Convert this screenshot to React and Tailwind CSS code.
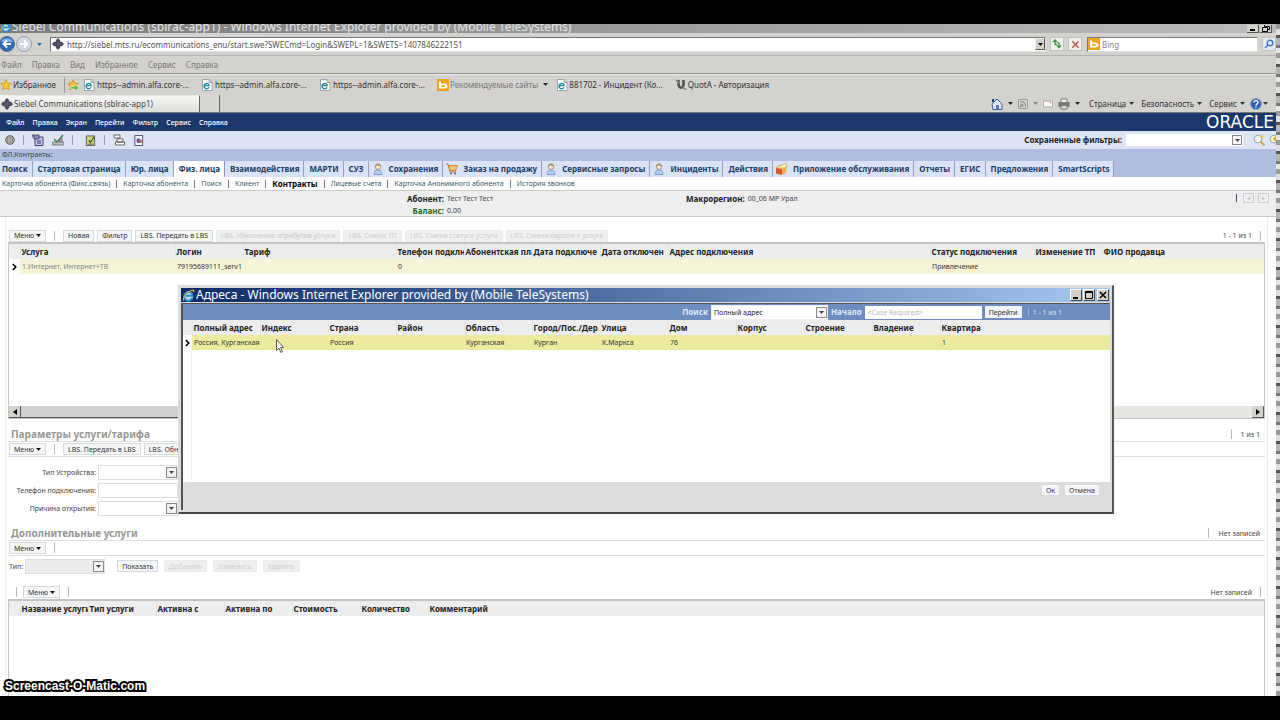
import { useState } from "react";

const favorites = [
  { id: 1, text: "https--admin.alfa.core-..." },
  { id: 2, text: "https--admin.alfa.core-..." },
  { id: 3, text: "https--admin.alfa.core-..." },
];

const screenTabs = [
  { text: "Поиск" },
  { text: "Стартовая страница" },
  { text: "Юр. лица" },
  { text: "Физ. лица", active: true },
  { text: "Взаимодействия" },
  { text: "МАРТИ" },
  { text: "СУЗ" },
  { text: "Сохранения", icon: "person" },
  { text: "Заказ на продажу", icon: "cart" },
  { text: "Сервисные запросы", icon: "person" },
  { text: "Инциденты", icon: "person" },
  { text: "Действия" },
  { text: "Приложение обслуживания", icon: "box" },
  { text: "Отчеты" },
  { text: "ЕГИС" },
  { text: "Предложения" },
  { text: "SmartScripts" },
];

const viewTabs = [
  "Карточка абонента (Фикс.связь)",
  "Карточка абонента",
  "Поиск",
  "Клиент",
  "Контракты",
  "Лицевые счета",
  "Карточка Анонимного абонента",
  "История звонков",
];

const serviceColumns = [
  { title: "Услуга", width: "w-[155px]", value: "1.Интернет, Интернет+ТВ" },
  { title: "Логин", width: "w-[68px]", value: "79195689111_serv1" },
  { title: "Тариф", width: "w-[153px]", value: "" },
  { title: "Телефон подклн", width: "w-[68px]", value: "0" },
  { title: "Абонентская пла", width: "w-[68px]", value: "" },
  { title: "Дата подключе", width: "w-[68px]", value: "" },
  { title: "Дата отключен", width: "w-[68px]", value: "" },
  { title: "Адрес подключения", width: "w-[262px]", value: "" },
  { title: "Статус подключения", width: "w-[104px]", value: "Привлечение" },
  { title: "Изменение ТП", width: "w-[68px]", value: "" },
  { title: "ФИО продавца", width: "", value: "" },
];

const addressColumns = [
  { title: "Полный адрес", width: "w-[68px]", value: "Россия, Курганская" },
  { title: "Индекс", width: "w-[68px]", value: "" },
  { title: "Страна", width: "w-[68px]", value: "Россия" },
  { title: "Район", width: "w-[68px]", value: "" },
  { title: "Область", width: "w-[68px]", value: "Курганская" },
  { title: "Город/Пос./Дер", width: "w-[68px]", value: "Курган" },
  { title: "Улица", width: "w-[68px]", value: "К.Маркса" },
  { title: "Дом", width: "w-[68px]", value: "76" },
  { title: "Корпус", width: "w-[68px]", value: "" },
  { title: "Строение", width: "w-[68px]", value: "" },
  { title: "Владение", width: "w-[68px]", value: "" },
  { title: "Квартира", width: "", value: "1" },
];

const extraColumns = [
  { title: "Название услуги", width: "w-[68px]" },
  { title: "Тип услуги", width: "w-[68px]" },
  { title: "Активна с", width: "w-[68px]" },
  { title: "Активна по", width: "w-[68px]" },
  { title: "Стоимость", width: "w-[68px]" },
  { title: "Количество", width: "w-[68px]" },
  { title: "Комментарий", width: "" },
];

function IeIcon({ className = "size-3" }) {
  return (
    <svg viewBox="0 0 16 16" className={className} fill="none">
      <circle cx="8" cy="8.5" r="5.6" fill="#bfe4f7" />
      <path d="M13 10.6A5.3 5.3 0 1 1 13.2 8.4H4.2" stroke="#2a86c8" strokeWidth="2.4" />
      <path d="M2.2 14C.2 11.500 5 4.500 11 2c3-1.200 4.400-.6 3.400 2" stroke="#e8b93c" strokeWidth="1.3" />
    </svg>
  );
}

function PageIcon() {
  return (
    <svg viewBox="0 0 12 12" className="size-3" fill="none">
      <path d="M1.500.5h6.500l3 3v8h-9.500z" fill="#fff" stroke="#9aa4ae" />
      <path d="M8 .5v3h3" stroke="#9aa4ae" />
      <path d="M8 8.200A2.600 2.600 0 1 1 8.200 6.600H3" stroke="#1f8a9c" strokeWidth="1.400" />
    </svg>
  );
}

function SiebelIcon() {
  return (
    <svg viewBox="0 0 12 12" className="size-3 shrink-0" fill="#4a4a5c">
      <path d="M6 0l2.200 2.200v1.600H10L12 6l-2 2.200H8.200v1.600L6 12 3.800 9.800V8.200H2L0 6l2-2.200h1.800V2.200z" />
      <path d="M6 3.500v5M3.500 6h5" stroke="#66667a" strokeWidth=".8" />
    </svg>
  );
}

function StarIcon({ add }) {
  return (
    <svg viewBox="0 0 12 12" className="size-3 shrink-0">
      <path d="M6 .8l1.600 3.400 3.700.4-2.800 2.500.8 3.700L6 9l-3.300 1.800.8-3.700L.7 4.600l3.700-.4z" fill="#f8c43a" stroke="#d8901c" strokeWidth=".8" />
      {add && <path d="M4 7.500h4V5.400L12 8.800 8 12v-2H4z" fill="#58b83c" stroke="#fff" strokeWidth=".5" />}
    </svg>
  );
}

function BingIcon() {
  return (
    <svg viewBox="0 0 12 12" className="size-3 shrink-0">
      <rect width="12" height="12" fill="#eda51f" />
      <path d="M2 2.500h2v2h3.500c4 0 4 5 0 5H2z" fill="#fff" />
      <ellipse cx="6" cy="7" rx="2" ry="1.100" fill="#eda51f" />
    </svg>
  );
}

function TabIcon({ name }) {
  if (name === "cart") {
    return (
      <svg viewBox="0 0 12 12" className="size-3 shrink-0" fill="none">
        <path d="M2.500 2.500h9L10 7.500H4z" fill="#f3b052" stroke="#cf8128" strokeWidth=".8" />
        <path d="M0 1h2l2 8h6" stroke="#a8793c" />
        <path d="M5.500 3v4M8 3v4M3 5h8" stroke="#fbe0b0" strokeWidth=".6" />
        <circle cx="5" cy="10.600" r="1" fill="#666" />
        <circle cx="9" cy="10.600" r="1" fill="#666" />
      </svg>
    );
  }
  if (name === "box") {
    return (
      <svg viewBox="0 0 12 12" className="size-3 shrink-0">
        <path d="M0 5l6 1v6l-6-1.500z" fill="#d9572f" />
        <path d="M6 6l4.500-2v5.500L6 12z" fill="#f0b24a" />
        <path d="M0 5l4-3 6.500 2L6 6z" fill="#f7dc8e" stroke="#b8772c" strokeWidth=".5" />
        <path d="M3 3L9 .5l2.500 1.500-2 2.500" fill="#fff1c4" stroke="#c2903c" strokeWidth=".6" />
      </svg>
    );
  }
  return (
    <svg viewBox="0 0 12 12" className="size-3 shrink-0">
      <path d="M2 11.500c0-3 1.500-4.500 4-4.500s4 1.500 4 4.500z" fill="#b4d0f0" stroke="#5f86bd" strokeWidth=".7" />
      <circle cx="6" cy="3.600" r="2.800" fill="#fbe9cf" stroke="#8b7a63" strokeWidth=".7" />
      <path d="M3.200 3.500C3.200-.3 8.800-.3 8.800 3.500 7 3.500 6 2.500 5.500 2c-.5 1-1.300 1.500-2.300 1.500z" fill="#a8936c" />
    </svg>
  );
}

function Caret({ className = "" }) {
  return (
    <svg viewBox="0 0 6 4" className={"h-[3px] w-[5px] shrink-0 " + className} fill="currentColor" preserveAspectRatio="none">
      <path d="M0 0h6L3 4z" />
    </svg>
  );
}

function Divider({ tone = "bg-[#bbb]" }) {
  return <span className={"block h-[10px] w-px shrink-0 " + tone} />;
}

function Button({ children, disabled, menu }) {
  return (
    <button
      disabled={disabled}
      className="flex h-3 shrink-0 items-center gap-[2px] border border-[#d5dade] bg-[#f5f6f7] px-1 text-[7px] leading-none text-[#333] disabled:border-[#ececec] disabled:bg-[#efefef] disabled:text-[#cdcdcd]"
    >
      {children}
      {menu && <Caret className="text-[#111]" />}
    </button>
  );
}

function Select({ id, value = "", width, tone = "border-[#ddd] bg-white" }) {
  return (
    <span className={"relative flex h-[15px] shrink-0 " + width}>
      <select id={id} defaultValue={value} className={"size-full appearance-none border pl-[2px] text-[7px] leading-none text-[#222] " + tone}>
        <option>{value}</option>
      </select>
      <span className="pointer-events-none absolute top-[2px] right-[1px] flex h-[11px] w-[11px] items-center justify-center border border-[#888] bg-[#f4f4f4]">
        <Caret className="text-[#444]" />
      </span>
    </span>
  );
}

function Grid({ columns, hasRow, rowTone, linkFirst, mark }) {
  return (
    <table className="w-full table-fixed border-collapse text-left">
      <thead>
        <tr className="h-[15px] bg-[#ededed] text-[8px] leading-none text-[#222]">
          <th className={mark}></th>
          {columns.map((col) => (
            <th key={col.title} className={"overflow-hidden border-l border-[#e4e4e4] pl-px font-bold whitespace-nowrap " + col.width}>
              {col.title}
            </th>
          ))}
        </tr>
      </thead>
      {hasRow && (
        <tbody>
          <tr className="h-[15px] text-[7px] leading-none text-[#333]">
            <td className="bg-white">
              <svg viewBox="0 0 5 8" className="mx-auto h-2 w-[5px]" fill="none" stroke="#000" strokeWidth="1.600">
                <path d="M.8 1l3 3-3 3" />
              </svg>
            </td>
            {columns.map((col, i) => (
              <td key={col.title} className={"overflow-hidden pl-[2px] whitespace-nowrap " + rowTone}>
                {linkFirst && i === 0 ? <a href="#service" className="text-[#7d8690]">{col.value}</a> : col.value}
              </td>
            ))}
          </tr>
        </tbody>
      )}
    </table>
  );
}

function BrowserChrome() {
  return (
    <header className="bg-[#d3d2ce] text-[#333]">
      <div className="flex h-[9px] items-end overflow-hidden bg-linear-to-r from-[#7c7c7c] to-[#bdbdbd]">
        <IeIcon className="size-3 shrink-0" />
        <span className="flex-1 text-[12px] leading-[13px] whitespace-nowrap text-[#e4e4e4]">
          Siebel Communications (sblrac-app1) - Windows Internet Explorer provided by (Mobile TeleSystems)
        </span>
        <span className="flex gap-px pr-1">
          <button aria-label="Свернуть" className="flex h-2 w-3 items-end border-r border-b border-[#555] bg-[#d3d2ce] px-[3px] pb-px">
            <span className="h-[2px] w-[5px] bg-black" />
          </button>
          <button aria-label="Восстановить" className="flex h-2 w-3 items-center justify-center border-r border-b border-[#555] bg-[#d3d2ce]">
            <svg viewBox="0 0 8 7" className="h-[7px] w-2" fill="none" stroke="#000">
              <path d="M2.500 0v1.500h5v3H6M.5 2.500h5v4h-5z" />
            </svg>
          </button>
        </span>
      </div>

      <div className="flex h-[22px] items-center">
        <button aria-label="Назад" className="-ml-px">
          <svg viewBox="0 0 16 16" className="size-4">
            <circle cx="8" cy="8" r="7.500" fill="#2b6cb8" stroke="#5a6f8c" />
            <path d="M2 6a6.500 6 0 0 1 12 0z" fill="#7eb0e2" />
            <path d="M12 8H5M8 4.500L4.500 8 8 11.500" stroke="#fff" strokeWidth="2" fill="none" />
          </svg>
        </button>
        <button aria-label="Вперед" className="ml-px">
          <svg viewBox="0 0 16 16" className="size-4">
            <circle cx="8" cy="8" r="7.500" fill="#cfd6de" stroke="#98a3b0" />
            <path d="M4 8h7M8 4.500l3.500 3.500L8 11.500" stroke="#fff" strokeWidth="2" fill="none" />
          </svg>
        </button>
        <Caret className="ml-[5px] text-[#3a6a90]" />
        <span className="ml-2 flex h-[15px] flex-1 items-center gap-[3px] border border-[#777] border-r-[#ddd] border-b-[#ddd] bg-white pl-px">
          <SiebelIcon />
          <input
            aria-label="Адрес"
            defaultValue="http://siebel.mts.ru/ecommunications_enu/start.swe?SWECmd=Login&SWEPL=1&SWETS=1407846222151"
            className="min-w-0 flex-1 text-[8px] leading-none text-[#555]"
          />
          <button aria-label="Журнал" className="flex h-3 w-[10px] items-center justify-center border border-t-[#eee] border-r-[#555] border-b-[#555] border-l-[#eee] bg-[#d3d2ce]">
            <Caret className="text-black" />
          </button>
        </span>
        <button aria-label="Обновить" className="ml-1 flex h-[14px] w-[14px] items-center justify-center border border-[#c4c4c0] bg-[#efefec]">
          <svg viewBox="0 0 10 10" className="size-[10px]" fill="none" stroke="#3e9440" strokeWidth="1.300">
            <path d="M3 6V1M1 3l2-2 2 2M7 3.500v5M5 6.500l2 2 2-2M3 5.500h2M5.500 4H7" />
          </svg>
        </button>
        <button aria-label="Остановить" className="ml-1 flex h-[14px] w-[14px] items-center justify-center border border-[#c4c4c0] bg-[#efefec]">
          <svg viewBox="0 0 10 10" className="size-[9px]" fill="none" stroke="#c25350" strokeWidth="1.500">
            <path d="M1.500 1.500l7 7M8.500 1.500l-7 7" />
          </svg>
        </button>
        <span className="ml-[5px] flex h-[15px] w-[171px] items-center gap-[2px] border border-[#777] border-r-[#ddd] border-b-[#ddd] bg-white">
          <BingIcon />
          <input aria-label="Поиск Bing" placeholder="Bing" className="min-w-0 flex-1 text-[8px] leading-none placeholder:text-[#888]" />
        </span>
        <button aria-label="Найти" className="ml-1 flex h-[14px] w-[14px] items-center justify-center border border-[#c4c4c0] bg-[#e4eaf2]">
          <svg viewBox="0 0 10 10" className="size-[10px]" fill="none" stroke="#3f74c4" strokeWidth="1.400">
            <circle cx="6" cy="4" r="2.800" />
            <path d="M4 6L1 9" />
          </svg>
        </button>
      </div>

      <nav className="flex h-[18px] items-center gap-[10px] border-t border-[#b4b3b0] pl-px text-[8px] leading-none text-[#777]">
        {["Файл", "Правка", "Вид", "Избранное", "Сервис", "Справка"].map((item) => (
          <button key={item}>{item}</button>
        ))}
      </nav>

      <div className="flex h-[22px] items-center border-t border-[#8f8f8c] text-[8px] leading-none whitespace-nowrap shadow-[inset_0_1px_0_#eee]">
        <button className="flex items-center gap-px">
          <StarIcon />
          Избранное
        </button>
        <span className="ml-2 h-4 w-px bg-[#999]" />
        <span className="mr-1 ml-[2px]"><StarIcon add /></span>
        {favorites.map((fav) => (
          <a key={fav.id} href="#fav" className="mr-3 flex items-center gap-[2px]">
            <PageIcon />
            {fav.text}
          </a>
        ))}
        <a href="#sites" className="flex items-center gap-px text-[#777]">
          <BingIcon />
          Рекомендуемые сайты
          <Caret className="ml-1 text-[#222]" />
        </a>
        <a href="#incident" className="ml-2 flex items-center gap-px">
          <PageIcon />
          881702 - Инцидент (Ко...
        </a>
        <a href="#quota" className="ml-3 flex items-center gap-px">
          <svg viewBox="0 0 12 12" className="size-3" fill="none" stroke="#555">
            <path d="M3.500 1v4c0 5 5 5 5 0V1" strokeWidth="2.600" />
            <path d="M1 1l3 3M11 11L8 8" strokeWidth="1.500" stroke="#888" />
          </svg>
          QuotA - Авторизация
        </a>
      </div>

      <div className="flex h-[18px] items-stretch border-b border-[#777] text-[8px] leading-none">
        <button className="flex w-[200px] items-center gap-px border-t border-r border-t-[#eee] border-r-[#666] bg-linear-to-b from-[#f6f6f4] to-[#dededb] pl-px text-[#444]">
          <SiebelIcon />
          Siebel Communications (sblrac-app1)
        </button>
        <button aria-label="Новая вкладка" className="w-5 border-r border-[#666] bg-[#d8d7d3]" />
        <div className="ml-auto flex items-center gap-[5px] pr-2">
          <svg viewBox="0 0 12 12" className="size-3">
            <path d="M1 6l5-5 5 5v5.500H2z" fill="#dce8f6" stroke="#3a5a94" />
            <path d="M5 7h3v4.500H5z" fill="#5a76ac" />
            <path d="M1 1h2v3H1z" fill="#27407a" />
          </svg>
          <Caret className="text-[#222]" />
          <svg viewBox="0 0 12 12" className="size-[10px]" fill="none" stroke="#888">
            <rect x=".5" y=".5" width="11" height="11" rx="1" />
            <path d="M3 6c2 0 3 1 3 3M3 3c4 0 6 2 6 6" strokeWidth="1.400" />
            <circle cx="3.300" cy="8.800" r=".8" fill="#888" />
          </svg>
          <Caret className="text-[#888]" />
          <svg viewBox="0 0 12 12" className="h-3 w-[10px]" fill="#fff" stroke="#999">
            <path d="M.5 2.500h11v7H.5z" />
            <path d="M8 4.500h2" stroke="#c55" />
          </svg>
          <svg viewBox="0 0 12 12" className="size-3">
            <path d="M3 1h6v4H3z" fill="#eee" stroke="#888" />
            <path d="M.5 4h11v5H.5z" fill="#777" />
            <path d="M3 7.500h6V11H3z" fill="#ddd" stroke="#777" />
          </svg>
          <Caret className="text-[#222]" />
          <button className="ml-1 flex items-center gap-[3px]">Страница <Caret /></button>
          <button className="ml-[2px] flex items-center gap-[3px]">Безопасность <Caret /></button>
          <button className="ml-[2px] flex items-center gap-[3px]">Сервис <Caret /></button>
          <button aria-label="Справка" className="flex items-center gap-px">
            <svg viewBox="0 0 12 12" className="size-3">
              <circle cx="6" cy="6" r="5.500" fill="#2f5fae" stroke="#8fa6cc" />
              <path d="M4 4.500c0-2.500 4-2.500 4 0C8 6 6 6 6 7.500M6 8.500v1.300" stroke="#fff" strokeWidth="1.400" fill="none" />
            </svg>
            <Caret />
          </button>
        </div>
      </div>
    </header>
  );
}

function SiebelHeader() {
  return (
    <div>
      <nav className="flex h-[18px] items-center gap-2 overflow-hidden bg-[#1c376c] pl-[6px] text-[7px] leading-none font-medium text-white">
        {["Файл", "Правка", "Экран", "Перейти", "Фильтр", "Сервис", "Справка"].map((item) => (
          <button key={item}>{item}</button>
        ))}
        <span className="ml-auto pr-[2px] font-['DejaVu_Sans'] text-[17px] leading-none">ORACLE</span>
      </nav>

      <div className="flex h-[18px] items-center bg-[#dfe4f3]">
        <div className="flex flex-1 items-center gap-2 pl-[5px]">
          <button aria-label="Карта сайта">
            <svg viewBox="0 0 12 12" className="size-[10px]" fill="#d4cfbe" stroke="#4a4658">
              <circle cx="6" cy="6" r="5.200" />
              <path d="M6 1v10M1 6h10M2 3.500h8M2 8.500h8M4 1.500c-1.500 3-1.500 6 0 9M8 1.500c1.500 3 1.500 6 0 9" fill="none" strokeWidth=".5" />
            </svg>
          </button>
          <Divider tone="bg-gray-400" />
          <button aria-label="Задачи">
            <svg viewBox="0 0 12 12" className="size-3">
              <path d="M3 3h8v8.500H3z" fill="#c9cbe8" stroke="#3d3d74" />
              <path d="M0 1h7v4H2z" fill="#8486b8" stroke="#33335c" strokeWidth=".7" />
              <path d="M5 7h4M5 9h4" stroke="#33335c" />
            </svg>
          </button>
          <button aria-label="Диаграмма">
            <svg viewBox="0 0 12 12" className="size-3" fill="none">
              <path d="M0 8h12v3H0z" fill="#b9bcc4" stroke="#666" strokeWidth=".7" />
              <path d="M2 5l3 3 6-7" stroke="#4b7f52" strokeWidth="1.500" />
              <path d="M8 8V5M10 8V3.500" stroke="#555" />
            </svg>
          </button>
          <Divider tone="bg-gray-400" />
          <button aria-label="Заметка" className="ml-1">
            <svg viewBox="0 0 12 12" className="size-[11px]">
              <path d="M1.500 1h9v10.500h-9z" fill="#d6d27c" stroke="#555" />
              <path d="M4 5.500L6 8l4-6" stroke="#39623a" strokeWidth="1.400" fill="none" />
              <path d="M3 10h6" stroke="#555" />
            </svg>
          </button>
          <Divider tone="bg-gray-400" />
          <button aria-label="Печать">
            <svg viewBox="0 0 12 12" className="size-3" fill="#fff" stroke="#555" strokeWidth=".9">
              <path d="M1 1h6v3H1zM4 5h6v3H4zM2.500 8h9v3h-9z" />
            </svg>
          </button>
          <button aria-label="Отчеты">
            <svg viewBox="0 0 12 12" className="size-[11px]">
              <path d="M2 .5h8.500v11H2z" fill="#f4f4fa" stroke="#44446a" />
              <path d="M4 4h4v4.500H4z" fill="#5b569e" />
              <circle cx="8" cy="7" r="1.800" fill="#b56a52" />
            </svg>
          </button>
        </div>
        <label htmlFor="saved" className="mr-1 text-[8px] leading-none font-bold text-[#222]">Сохраненные фильтры:</label>
        <span className="relative flex h-3 w-[117px]">
          <select id="saved" className="size-full appearance-none bg-white text-[7px]">
            <option></option>
          </select>
          <span className="pointer-events-none absolute top-px right-px flex h-[10px] w-[10px] items-center justify-center border border-[#888] bg-[#f4f4f4]">
            <Caret className="text-[#444]" />
          </span>
        </span>
        <button aria-label="Новый запрос" className="ml-[10px]">
          <svg viewBox="0 0 12 12" className="size-3" fill="none">
            <circle cx="5" cy="5" r="3.800" fill="#f4f8fd" stroke="#8fa2c4" />
            <path d="M7.500 7.500l4 4" stroke="#c9a53a" strokeWidth="2" />
            <path d="M9 0v5M6.500 2.500h5" stroke="#e8c64a" />
          </svg>
        </button>
        <button aria-label="Выполнить запрос" className="w-[11px] overflow-hidden pl-1">
          <svg viewBox="0 0 12 12" className="size-3" fill="none">
            <circle cx="5" cy="5" r="3.800" fill="#fdf3c4" stroke="#8fa2c4" />
            <path d="M4 5l3-3v6z" fill="#d9a52c" />
          </svg>
        </button>
      </div>

      <div className="h-3 bg-[#afbee0] pl-[2px] text-[7px] leading-[11px] text-[#444]">ФЛ.Контракты:</div>

      <nav className="flex h-4 bg-[#afbee0] text-[8px] leading-none font-bold whitespace-nowrap text-[#1d3d66]">
        {screenTabs.map((tab, i) => (
          <a
            key={tab.text}
            href="#screen"
            className={
              "flex items-center gap-[5px] border-r pr-1 " +
              (i === 0 ? "pl-[2px] " : tab.icon ? "pl-[3px] " : "pl-[5px] ") +
              (tab.active ? "border-[#8d97bb] bg-white" : "border-[#9b9fbe] bg-[#d9e3f5]")
            }
          >
            {tab.icon && <TabIcon name={tab.icon} />}
            {tab.text}
          </a>
        ))}
      </nav>

      <nav className="flex h-[13px] items-center gap-[6px] bg-white pl-[2px] text-[7px] leading-none whitespace-nowrap text-[#3c5a66]">
        {viewTabs.map((view, i) => (
          <span key={view} className="flex items-center gap-[6px]">
            {i > 0 && <span className="h-2 w-px bg-[#777]" />}
            <a href="#view" className={view === "Контракты" ? "text-[8px] font-bold text-black" : ""}>{view}</a>
          </span>
        ))}
      </nav>

      <div className="flex h-[27px] items-start border-y border-[#c8c8c8] bg-[#eeeeee] pt-[2px] text-[8px] leading-3 text-[#444]">
        <dl className="grid w-1/2 grid-cols-[444px_1fr] gap-x-[3px]">
          <dt className="text-right font-bold text-[#222]">Абонент:</dt>
          <dd className="text-[7px]">Тест Тест Тест</dd>
          <dt className="text-right font-bold text-[#24702c]">Баланс:</dt>
          <dd className="text-[7px]">0.00</dd>
        </dl>
        <dl className="flex flex-1 gap-[3px] pl-12">
          <dt className="font-bold text-[#222]">Макрорегион:</dt>
          <dd className="text-[7px]">00_06 МР Урал</dd>
        </dl>
        <span className="mt-px h-2 w-px bg-[#3b4a6a]" />
        <button disabled aria-label="Предыдущая" className="ml-[6px] h-[10px] w-[11px] border border-[#ccc] text-[6px] leading-none text-[#bbb]">◂</button>
        <button disabled aria-label="Следующая" className="mr-[7px] ml-1 h-[10px] w-[11px] border border-[#ccc] text-[6px] leading-none text-[#bbb]">▸</button>
      </div>
    </div>
  );
}

function SectionTitle({ title, count }) {
  return (
    <div className="flex h-[15px] items-center justify-between border-b border-[#ddd] pr-[5px] pl-[3px]">
      <h2 className="text-[10px] leading-none font-bold text-[#969696]">{title}</h2>
      <span className="flex items-center gap-[9px] text-[7px] leading-none text-[#444]">
        <Divider />
        {count}
      </span>
    </div>
  );
}

function Toolbar({ children }) {
  return (
    <div className="flex h-[15px] items-center gap-[3px] border-b border-[#ddd] pl-px">
      <Button menu>Меню</Button>
      <span className="mx-[5px]"><Divider /></span>
      {children}
    </div>
  );
}

function Field({ id, label, list }) {
  return (
    <div className="flex h-[18px] items-center gap-[2px]">
      <label htmlFor={id} className="w-[88px] text-right text-[7px] leading-none text-[#444]">{label}</label>
      {list ? <Select id={id} width="w-20" /> : <input id={id} className="h-[15px] w-20 border border-[#ddd] bg-white text-[7px]" />}
    </div>
  );
}

function Workspace() {
  return (
    <main className="mr-2 ml-[5px] flex flex-1 flex-col border-x border-[#ececec] bg-white px-[2px]">
      <div className="mt-3 flex h-[13px] items-center gap-[3px] pl-px">
        <Button menu>Меню</Button>
        <span className="mx-[5px]"><Divider /></span>
        <Button>Новая</Button>
        <Button>Фильтр</Button>
        <Button>LBS. Передать в LBS</Button>
        <Button disabled>LBS. Изменение атрибутов услуги</Button>
        <Button disabled>LBS. Смена ТП</Button>
        <Button disabled>LBS. Смена статуса услуги</Button>
        <Button disabled>LBS. Смена пароля к услуге</Button>
        <span className="ml-auto flex items-center gap-2 pr-1 text-[7px] leading-none text-[#444]">
          1 - 1 из 1
          <Divider />
        </span>
      </div>

      <section className="flex h-[177px] flex-col border border-t-2 border-[#c4c4c4]">
        <Grid columns={serviceColumns} hasRow linkFirst rowTone="bg-[#f5f5d5]" mark="w-[11px]" />
        <div className="mt-auto flex h-3 bg-[#e6e6e3]">
          <button aria-label="Влево" className="flex w-3 items-center justify-center border-r border-b border-[#555] bg-[#d3d2ce]">
            <svg viewBox="0 0 4 6" className="h-[6px] w-1"><path d="M4 0v6L0 3z" /></svg>
          </button>
          <div className="w-3/5 border-r border-b border-[#555] bg-[#d0d0ce]" />
          <button aria-label="Вправо" className="ml-auto flex w-3 items-center justify-center border-r border-b border-[#555] bg-[#d3d2ce]">
            <svg viewBox="0 0 4 6" className="h-[6px] w-1"><path d="M0 0v6l4-3z" /></svg>
          </button>
        </div>
      </section>

      <section className="mt-2">
        <SectionTitle title="Параметры услуги/тарифа" count="1 из 1" />
        <Toolbar>
          <Button>LBS. Передать в LBS</Button>
          <Button>LBS. Обновить</Button>
        </Toolbar>
        <form className="mt-[6px]">
          <Field id="device" label="Тип Устройства:" list />
          <Field id="phone" label="Телефон подключения:" />
          <Field id="reason" label="Причина открытия:" list />
        </form>
      </section>

      <section className="mt-[9px]">
        <SectionTitle title="Дополнительные услуги" count="Нет записей" />
        <Toolbar />
        <div className="flex h-5 items-center gap-[6px] pl-px">
          <label htmlFor="kind" className="-mr-1 text-[7px] leading-none text-[#444]">Тип:</label>
          <span className="mr-[6px] flex">
            <Select id="kind" width="w-20" tone="border-[#ddd] bg-[#ebebeb]" />
          </span>
          <Button>Показать</Button>
          <Button disabled>Добавить</Button>
          <Button disabled>Изменить</Button>
          <Button disabled>Удалить</Button>
        </div>
      </section>

      <div className="mt-[9px] flex h-[14px] items-center gap-[6px] pl-2">
        <Divider />
        <Button menu>Меню</Button>
        <span className="ml-[2px]"><Divider /></span>
        <span className="ml-auto flex items-center gap-2 pr-1 text-[7px] leading-none text-[#444]">
          Нет записей
          <Divider />
        </span>
      </div>
      <section className="flex-1 border border-t-2 border-b-0 border-[#c4c4c4]">
        <Grid columns={extraColumns} mark="w-[11px]" />
      </section>
    </main>
  );
}

function AddressDialog({ onClose }) {
  const buttonClass = "flex h-3 w-3 items-center justify-center border border-t-white border-r-[#444] border-b-[#444] border-l-white bg-[#d4d0c8]";
  return (
    <div role="dialog" aria-label="Адреса" className="absolute top-[285px] right-[166px] left-[178px] flex h-[229px] flex-col border-t border-r-2 border-b-2 border-l border-t-[#ddd] border-r-[#555] border-b-[#444] border-l-[#ddd] bg-[#dcdcdc] p-[2px]">
      <div className="flex h-[14px] items-center gap-px bg-linear-to-r from-[#0f2a66] to-[#a6caf0] pr-px pl-px">
        <IeIcon className="size-[13px] shrink-0" />
        <span className="flex-1 text-[12px] leading-[14px] whitespace-nowrap text-white">
          Адреса - Windows Internet Explorer provided by (Mobile TeleSystems)
        </span>
        <button aria-label="Свернуть" className={buttonClass}>
          <svg viewBox="0 0 8 8" className="size-2"><path d="M1 6h5v2H1z" /></svg>
        </button>
        <button aria-label="Развернуть" className={buttonClass}>
          <svg viewBox="0 0 8 8" className="size-2" fill="none" stroke="#000"><path d="M.5.500h7v7h-7zM.5 1.500h7" /></svg>
        </button>
        <button aria-label="Закрыть" onClick={onClose} className={buttonClass + " ml-px"}>
          <svg viewBox="0 0 8 8" className="size-2" stroke="#000" strokeWidth="1.500"><path d="M1 1l6 6M7 1L1 7" /></svg>
        </button>
      </div>
      <div className="mt-px flex flex-1 flex-col border-t border-l-2 border-[#555] bg-white">
        <div className="flex h-4 items-center gap-[3px] bg-[#6d8dbe] pr-12 text-[8px] leading-none font-bold text-[#dfe9f6]">
          <label htmlFor="field" className="ml-auto">Поиск</label>
          <Select id="field" value="Полный адрес" width="w-[117px]" tone="border-[#eee] bg-white font-normal" />
          <label htmlFor="start">Начало</label>
          <input id="start" placeholder="<Case Required>" className="h-[13px] w-[117px] bg-white px-[3px] text-[7px] font-normal text-[#333] placeholder:text-[#bbb]" />
          <button className="h-3 bg-[#f2f4f7] px-1 text-[7px] leading-none font-normal text-[#333]">Перейти</button>
          <span className="ml-[3px] h-2 w-px bg-[#9db3d6]" />
          <span className="ml-px text-[7px] font-normal">1 - 1 из 1</span>
        </div>
        <Grid columns={addressColumns} hasRow rowTone="bg-[#ecea9c]" mark="w-[9px]" />
        <div className="ml-2 flex-1 border-l border-[#f2f2f2]" />
        <div className="flex h-7 items-start justify-end gap-1 bg-[#dddddd] pt-[2px] pr-[10px]">
          <Button>Ок</Button>
          <Button>Отмена</Button>
        </div>
      </div>
    </div>
  );
}

export default function App() {
  const [open, setOpen] = useState(true);

  return (
    <div className="relative flex min-h-screen flex-col bg-black py-6 font-['Noto_Sans',sans-serif]">
      <div className="flex flex-1 overflow-hidden">
        <div className="flex min-w-0 flex-1 flex-col bg-white">
          <BrowserChrome />
          <SiebelHeader />
          <Workspace />
        </div>
        <div className="w-1 bg-[repeating-linear-gradient(180deg,#9a9a9a_0_5px,#dedede_5px_11px,#555_11px_14px,#b5b5b5_14px_21px,#777_21px_24px,#e6e6e6_24px_29px)]" />
      </div>

      {open && <AddressDialog onClose={() => setOpen(false)} />}

      <svg viewBox="0 0 8 14" className="absolute top-[339px] left-[276px] h-[14px] w-2">
        <path d="M.5.500v11l2.500-2.500 1.800 4.500 1.600-.7L4.600 8.500h3z" fill="#fff" stroke="#333" strokeWidth=".8" />
      </svg>

      <div className="absolute bottom-[27px] left-[5px] text-[12px] leading-[14px] font-bold text-white font-['Liberation_Sans',sans-serif] [-webkit-text-stroke:4px_#000] [paint-order:stroke]">
        Screencast-O-Matic.com
      </div>
    </div>
  );
}
